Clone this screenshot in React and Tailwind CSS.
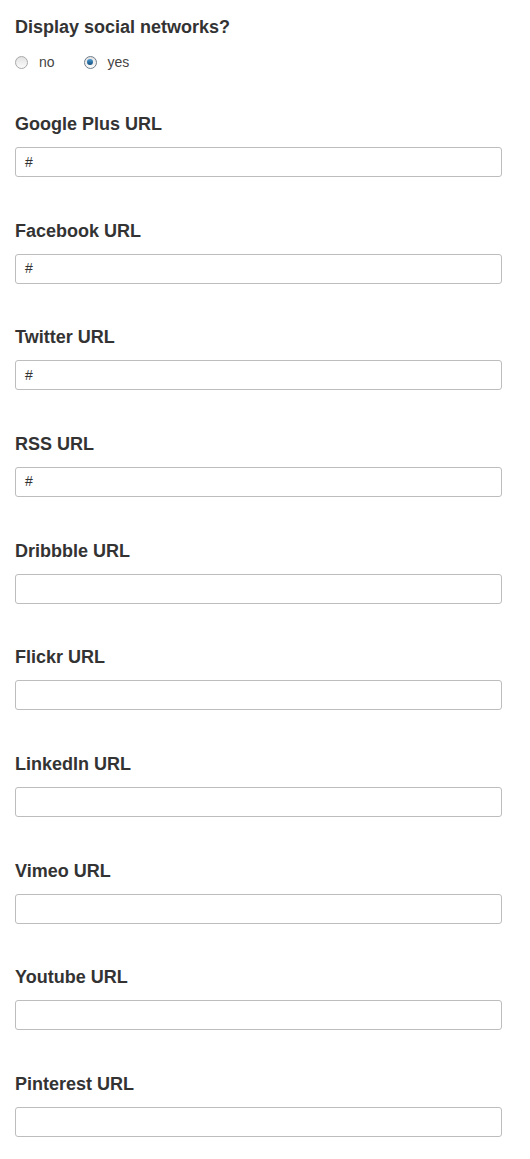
const fields = [
  { label: 'Google Plus URL', value: '#' },
  { label: 'Facebook URL', value: '#' },
  { label: 'Twitter URL', value: '#' },
  { label: 'RSS URL', value: '#' },
  { label: 'Dribbble URL', value: '' },
  { label: 'Flickr URL', value: '' },
  { label: 'LinkedIn URL', value: '' },
  { label: 'Vimeo URL', value: '' },
  { label: 'Youtube URL', value: '' },
  { label: 'Pinterest URL', value: '' },
];

function Radio({ checked }) {
  return (
    <span
      className={`relative inline-block w-[13px] h-[13px] rounded-full border ${
        checked ? 'border-[#6f7d8a]' : 'border-[#a8a8a8]'
      } bg-gradient-to-b from-[#e2e2e2] to-[#fbfbfb]`}
    >
      {checked && (
        <span className="absolute left-[2.5px] top-[2.5px] w-[6px] h-[6px] rounded-full bg-gradient-to-b from-[#4a9ad4] to-[#14507d]" />
      )}
    </span>
  );
}

export default function App() {
  return (
    <div className="bg-white min-h-[1159px] w-[530px] px-[15px] pt-[15px] text-[#333]" style={{ fontFamily: '"Liberation Sans", Arial, sans-serif' }}>
      {/* Display toggle */}
      <div className="text-[18px] leading-[24px] font-bold">Display social networks?</div>
      <div className="flex items-center h-[20px] mt-[13px] text-[14px] text-[#444]">
        <label className="flex items-center">
          <Radio />
          <span className="ml-[11px]">no</span>
        </label>
        <label className="flex items-center ml-[29px]">
          <Radio checked />
          <span className="ml-[11px]">yes</span>
        </label>
      </div>

      <div className="mt-[40px]">
        {fields.map((f) => (
          <div key={f.label} className="mb-[41.667px]">
            <div className="text-[18px] leading-[24px] font-bold mb-[11px]">{f.label}</div>
            <div className="w-[487px] h-[30px] border border-[#bdbdbd] rounded-[3px] flex items-center pl-[9px] text-[14px] text-[#333]">
              {f.value}
            </div>
          </div>
        ))}
      </div>
    </div>
  );
}
